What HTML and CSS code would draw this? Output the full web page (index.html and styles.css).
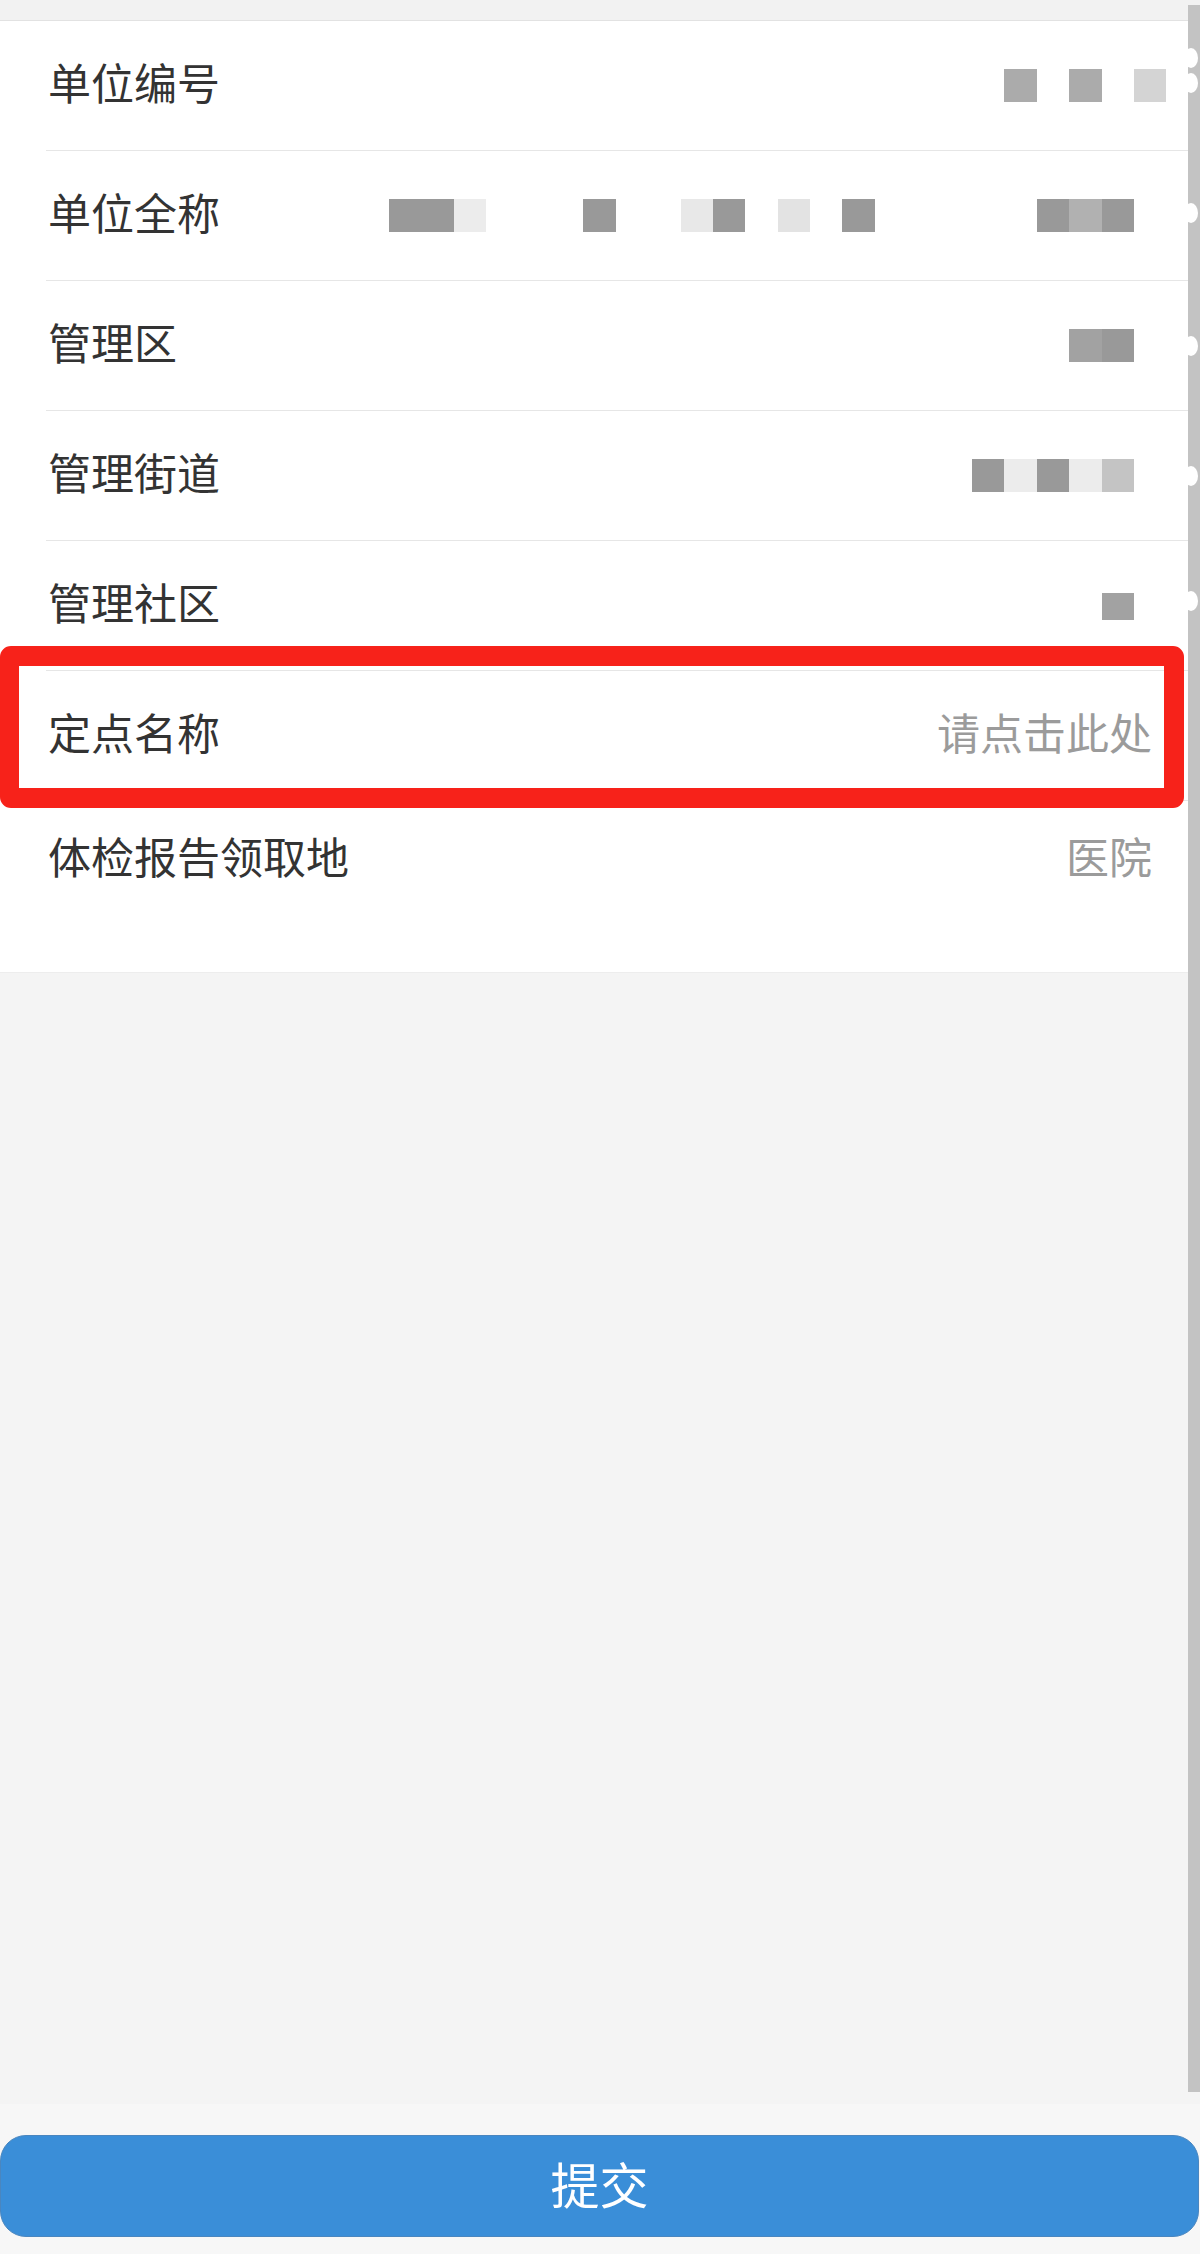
FILE: index.html
```html
<!DOCTYPE html>
<html lang="zh-CN">
<head>
<meta charset="utf-8">
<title>表单</title>
<link rel="stylesheet" href="styles.css">
</head>
<body>
<div class="page">
  <div class="topbar"></div>
  <div class="list">
    <div class="row">
      <span class="label">单位编号</span>
      <div class="mosaic">
        <i class="cell mid" style="grid-column:20"></i>
        <i class="cell mid" style="grid-column:22"></i>
        <i class="cell light" style="grid-column:24"></i>
      </div>
    </div>
    <div class="row">
      <span class="label">单位全称</span>
      <div class="mosaic">
        <i class="cell dark" style="grid-column:1"></i>
        <i class="cell dark" style="grid-column:2"></i>
        <i class="cell pale" style="grid-column:3"></i>
        <i class="cell dark" style="grid-column:7"></i>
        <i class="cell pale2" style="grid-column:10"></i>
        <i class="cell dark" style="grid-column:11"></i>
        <i class="cell pale3" style="grid-column:13"></i>
        <i class="cell dark" style="grid-column:15"></i>
        <i class="cell dark" style="grid-column:21"></i>
        <i class="cell soft" style="grid-column:22"></i>
        <i class="cell dark" style="grid-column:23"></i>
      </div>
    </div>
    <div class="row">
      <span class="label">管理区</span>
      <div class="mosaic">
        <i class="cell dark2" style="grid-column:22"></i>
        <i class="cell dark" style="grid-column:23"></i>
      </div>
    </div>
    <div class="row">
      <span class="label">管理街道</span>
      <div class="mosaic">
        <i class="cell dark" style="grid-column:19"></i>
        <i class="cell pale" style="grid-column:20"></i>
        <i class="cell dark" style="grid-column:21"></i>
        <i class="cell pale" style="grid-column:22"></i>
        <i class="cell silver" style="grid-column:23"></i>
      </div>
    </div>
    <div class="row">
      <span class="label">管理社区</span>
      <div class="mosaic">
        <i class="cell dark2 short" style="grid-column:23"></i>
      </div>
    </div>
    <div class="row">
      <span class="label">定点名称</span>
      <span class="value">请点击此处</span>
    </div>
    <div class="row last">
      <span class="label">体检报告领取地</span>
      <span class="value">医院</span>
    </div>
    <div class="highlight"></div>
  </div>
  <div class="filler"></div>
  <div class="footer">
    <button class="submit" type="button">提交</button>
  </div>
  <div class="bottom"></div>
  <div class="scrollbar">
    <i class="bump" style="top:43px"></i>
    <i class="bump" style="top:68px"></i>
    <i class="bump" style="top:198px"></i>
    <i class="bump" style="top:331px"></i>
    <i class="bump" style="top:461px"></i>
    <i class="bump" style="top:586px"></i>
  </div>
</div>
</body>
</html>
```
FILE: styles.css
```css
* { box-sizing: border-box; }
html, body {
  margin: 0;
  padding: 0;
  background: #ffffff;
}
body {
  font-family: "Noto Sans CJK SC", "Noto Sans", sans-serif;
}
.page {
  position: relative;
  width: 1200px;
  height: 2267px;
  display: flex;
  flex-direction: column;
  overflow: hidden;
}
.topbar {
  height: 21px;
  flex: none;
  background: #f2f2f2;
  border-bottom: 1px solid #e2e2e2;
}
.list {
  position: relative;
  flex: none;
  background: #ffffff;
}
.row {
  height: 130px;
  margin-left: 46px;
  padding-left: 2px;
  padding-right: 48px;
  padding-bottom: 10px;
  border-bottom: 1px solid #e6e6e6;
  display: grid;
  grid-template-columns: 341px 1fr;
  align-items: center;
}
.row.last {
  height: 171px;
  border-bottom: none;
  align-items: start;
  padding-top: 29px;
  padding-bottom: 0;
}
.label {
  font-size: 43px;
  line-height: 50px;
  color: #333333;
  white-space: nowrap;
}
.value {
  font-size: 43px;
  line-height: 50px;
  color: #9b9b9b;
  justify-self: end;
  white-space: nowrap;
}
.mosaic {
  display: grid;
  grid-template-columns: repeat(24, 32.4px);
  height: 33px;
  margin-top: 10px;
}
.cell {
  display: block;
  height: 33px;
  grid-row: 1;
}
.cell.short { height: 27px; margin-top: 4px; }
.cell.dark { background: #999999; }
.cell.dark2 { background: #a2a2a2; }
.cell.mid { background: #ababab; }
.cell.soft { background: #b1b1b1; }
.cell.silver { background: #c4c4c4; }
.cell.light { background: #d4d4d4; }
.cell.pale { background: #ececec; }
.cell.pale2 { background: #e8e8e8; }
.cell.pale3 { background: #e3e3e3; }
.highlight {
  position: absolute;
  left: 0;
  top: 625px;
  width: 1184px;
  height: 162px;
  border: 20px solid #f7221a;
  border-left-width: 19px;
  border-radius: 11px;
}
.filler {
  flex: none;
  height: 1132px;
  background: #f4f4f4;
  border-top: 1px solid #ededed;
}
.footer {
  flex: none;
  background: #f7f7f7;
  padding: 31px 1px 17px 0;
}
.submit {
  display: block;
  width: 100%;
  height: 102px;
  margin: 0;
  padding: 0 0 6px;
  border: 1px solid #4a86bf;
  border-radius: 26px;
  background: #3a8ed8;
  color: #ffffff;
  font-family: "Noto Sans CJK SC", "Noto Sans", sans-serif;
  font-size: 49px;
  line-height: 94px;
}
.bottom {
  flex: 1;
  background: #ffffff;
}
.scrollbar {
  position: absolute;
  right: 0;
  top: 5px;
  width: 12px;
  height: 2087px;
  background: #c3c3c3;
}
.bump {
  position: absolute;
  left: -4px;
  width: 14px;
  height: 20px;
  border-radius: 50%;
  background: #ffffff;
}
```
